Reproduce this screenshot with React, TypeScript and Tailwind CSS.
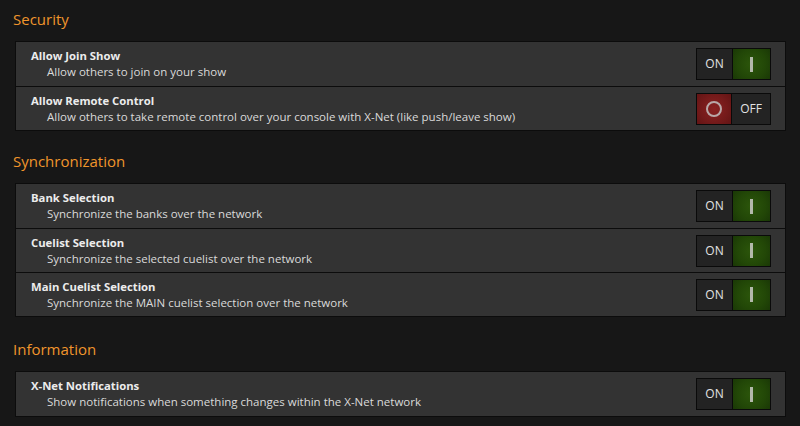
import type { ReactNode } from "react";

type Setting = { title: string; desc: string; on: boolean };

const SECTIONS: { heading: string; gap: string; items: Setting[] }[] = [
  {
    heading: "Security",
    gap: "",
    items: [
      { title: "Allow Join Show", desc: "Allow others to join on your show", on: true },
      {
        title: "Allow Remote Control",
        desc: "Allow others to take remote control over your console with X-Net (like push/leave show)",
        on: false,
      },
    ],
  },
  {
    heading: "Synchronization",
    gap: "mt-[17px]",
    items: [
      { title: "Bank Selection", desc: "Synchronize the banks over the network", on: true },
      { title: "Cuelist Selection", desc: "Synchronize the selected cuelist over the network", on: true },
      { title: "Main Cuelist Selection", desc: "Synchronize the MAIN cuelist selection over the network", on: true },
    ],
  },
  {
    heading: "Information",
    gap: "mt-[19px]",
    items: [
      {
        title: "X-Net Notifications",
        desc: "Show notifications when something changes within the X-Net network",
        on: true,
      },
    ],
  },
];

function Toggle({ on }: { on: boolean }) {
  return (
    <div className="flex h-[32px] border border-[#0a0a0a]">
      {on ? (
        <>
          <div className="flex w-[35px] items-center justify-center bg-[#232323] text-[12px] text-[#e2e2e2]">
            ON
          </div>
          <div className="flex w-[38px] items-center justify-center border-l border-[#0a0a0a] bg-[radial-gradient(circle,#2c560b_0%,#224707_60%,#1a3806_100%)]">
            <div className="h-[15px] w-[3px] bg-[#b3b9ab]" />
          </div>
        </>
      ) : (
        <>
          <div className="flex w-[35px] items-center justify-center border-r border-[#0a0a0a] bg-[radial-gradient(circle,#8a2222_0%,#741a1a_60%,#621414_100%)]">
            <div className="h-[16px] w-[16px] rounded-full border-2 border-[#b9a8a8]" />
          </div>
          <div className="flex w-[38px] items-center justify-center bg-[#232323] text-[12px] text-[#e2e2e2]">
            OFF
          </div>
        </>
      )}
    </div>
  );
}

function Panel({ children }: { children: ReactNode }) {
  return (
    <div className="mx-[15px] mr-[14px] border border-[#0c0c0c] bg-[#333333]">{children}</div>
  );
}

export default function App() {
  return (
    <div
      className="h-[426px] w-[800px] overflow-hidden bg-[#171717] pt-[6px]"
      style={{ fontFamily: '"Open Sans", "Noto Sans", sans-serif' }}
    >
      {SECTIONS.map((section) => (
        <div key={section.heading} className={section.gap}>
          <h2 className="mb-[9px] pl-[13px] text-[15px] leading-[26px] text-[#f0952c]">
            {section.heading}
          </h2>
          <Panel>
            {section.items.map((item, i) => (
              <div
                key={item.title}
                className={
                  "flex h-[44px] items-center justify-between pr-[14px] " +
                  (i > 0 ? "border-t border-[#0c0c0c]" : "")
                }
              >
                <div className="pl-[15px]">
                  <div className="text-[11.3px] font-bold leading-[16px] text-[#ececec]">{item.title}</div>
                  <div className="pl-[16px] text-[11.5px] leading-[16px] text-[#dadada]">{item.desc}</div>
                </div>
                <Toggle on={item.on} />
              </div>
            ))}
          </Panel>
        </div>
      ))}
    </div>
  );
}
